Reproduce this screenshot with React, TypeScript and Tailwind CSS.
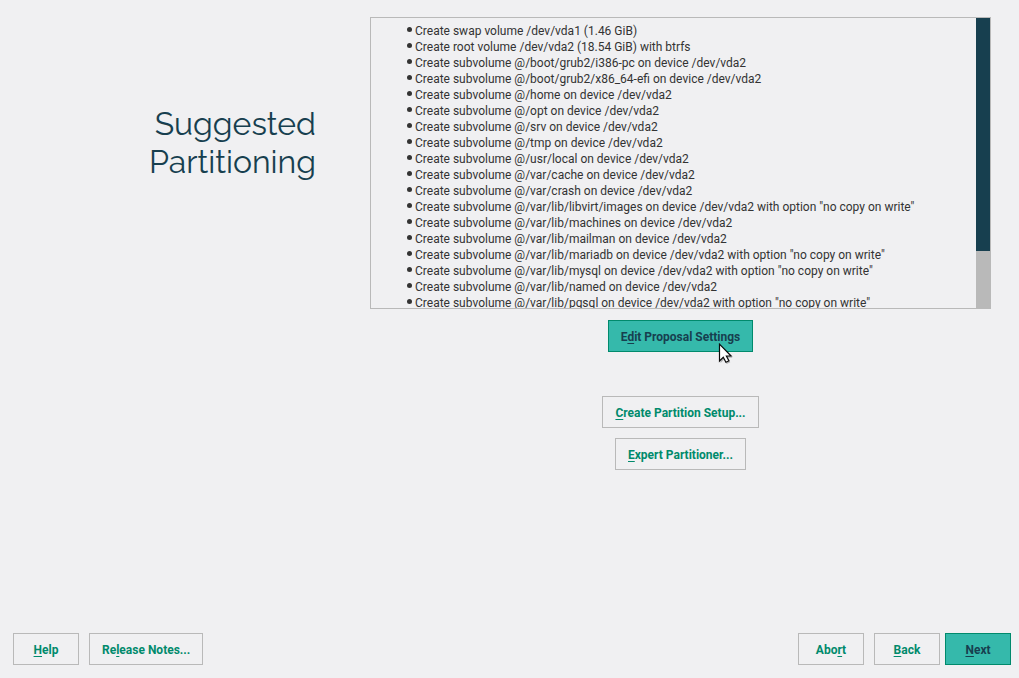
import type { ReactNode } from "react";

const actions: string[] = [
  "Create swap volume /dev/vda1 (1.46 GiB)",
  "Create root volume /dev/vda2 (18.54 GiB) with btrfs",
  "Create subvolume @/boot/grub2/i386-pc on device /dev/vda2",
  "Create subvolume @/boot/grub2/x86_64-efi on device /dev/vda2",
  "Create subvolume @/home on device /dev/vda2",
  "Create subvolume @/opt on device /dev/vda2",
  "Create subvolume @/srv on device /dev/vda2",
  "Create subvolume @/tmp on device /dev/vda2",
  "Create subvolume @/usr/local on device /dev/vda2",
  "Create subvolume @/var/cache on device /dev/vda2",
  "Create subvolume @/var/crash on device /dev/vda2",
  'Create subvolume @/var/lib/libvirt/images on device /dev/vda2 with option "no copy on write"',
  "Create subvolume @/var/lib/machines on device /dev/vda2",
  "Create subvolume @/var/lib/mailman on device /dev/vda2",
  'Create subvolume @/var/lib/mariadb on device /dev/vda2 with option "no copy on write"',
  'Create subvolume @/var/lib/mysql on device /dev/vda2 with option "no copy on write"',
  "Create subvolume @/var/lib/named on device /dev/vda2",
  'Create subvolume @/var/lib/pgsql on device /dev/vda2 with option "no copy on write"',
];

type ButtonProps = {
  label: string;
  // Position of the underlined shortcut letter in the label
  mnemonic?: number;
  primary?: boolean;
  children?: ReactNode;
};

function Button({ label, mnemonic = 0, primary = false, children }: ButtonProps) {
  const tone = primary
    ? "border-[#008a6c] bg-[#35b9ab] text-[#173f4f]"
    : "border-[#b9b9b9] bg-transparent text-[#008a6c]";
  return (
    <button
      type="button"
      className={`relative h-8 min-w-[66px] border px-3 pt-0.5 text-center text-xs font-bold whitespace-nowrap ${tone}`}
    >
      {label.slice(0, mnemonic)}
      <span className="underline decoration-1 underline-offset-2 [text-decoration-skip-ink:none]">
        {label[mnemonic]}
      </span>
      {label.slice(mnemonic + 1)}
      {children}
    </button>
  );
}

function Pointer() {
  return (
    <svg
      aria-hidden="true"
      viewBox="0 0 15 21"
      className="absolute top-[22px] right-[19px] h-[21px] w-[15px]"
    >
      <path
        d="M2.5 2.5V20L6 16.5l2.7 4.5 3.6-1.7-2.5-4.6h4.7z"
        fill="#000"
        opacity="0.25"
      />
      <path
        d="M1.5 1.2V18L5.3 14.3l2.6 4.9 3-1.5-2.5-4.7h4.7z"
        fill="#fff"
        stroke="#0b0b0b"
        strokeWidth="1.2"
        strokeLinejoin="miter"
      />
    </svg>
  );
}

export default function App() {
  return (
    <div className="flex min-h-screen flex-col bg-[#f0f0f2] font-['Roboto',sans-serif] text-[#333333]">
      <main className="flex flex-1 pt-[17px] pr-7">
        <header className="w-[370px] shrink-0 pt-[88px] pr-[54px] pl-8 text-right">
          <h1 className="font-['Raleway','Lato',sans-serif] text-[32px] leading-[38px] font-normal text-[#173f4f]">
            Suggested
            <br />
            Partitioning
          </h1>
        </header>
        <div className="flex min-w-0 flex-1 flex-col items-center">
          <section
            aria-label="Proposed actions"
            className="flex h-[292px] w-full border border-[#b9b9b9]"
          >
            <ul className="min-w-0 flex-1 overflow-hidden pt-[5px] pl-9 text-xs leading-4 whitespace-nowrap">
              {actions.map((action) => (
                <li
                  key={action}
                  className="flex items-center gap-[3px] before:mb-[3px] before:size-[5px] before:rounded-full before:bg-[#333333]"
                >
                  {action}
                </li>
              ))}
            </ul>
            <div className="w-3.5 shrink-0 bg-[#b9b9b9]">
              <div className="h-[233px] bg-[#173f4f]" />
            </div>
          </section>
          <div className="mt-[11px] flex">
            <Button label="Edit Proposal Settings" mnemonic={1} primary>
              <Pointer />
            </Button>
          </div>
          <div className="mt-11 flex flex-col items-center gap-2.5">
            <Button label="Create Partition Setup..." />
            <Button label="Expert Partitioner..." />
          </div>
        </div>
      </main>
      <footer className="flex justify-between pr-2 pb-[13px] pl-[13px]">
        <div className="flex gap-2.5">
          <Button label="Help" />
          <Button label="Release Notes..." mnemonic={2} />
        </div>
        <div className="flex gap-[5px]">
          <div className="flex gap-2.5">
            <Button label="Abort" mnemonic={3} />
            <Button label="Back" />
          </div>
          <Button label="Next" primary />
        </div>
      </footer>
    </div>
  );
}
